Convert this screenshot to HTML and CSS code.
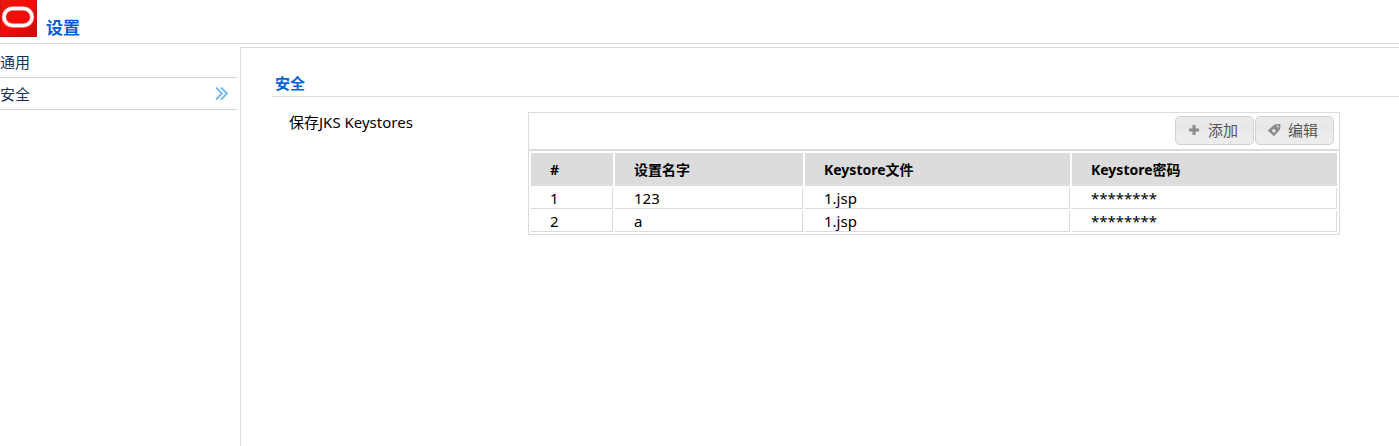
FILE: index.html
```html
<!DOCTYPE html>
<html lang="zh-CN">
<head>
<meta charset="utf-8">
<meta name="viewport" content="width=device-width, initial-scale=1">
<title>设置</title>
<link rel="stylesheet" href="styles.css">
</head>
<body>
<header class="header">
  <svg class="logo" viewBox="0 0 37 37" aria-hidden="true">
    <defs>
      <linearGradient id="red" x1="0" y1="0" x2="1" y2="1">
        <stop offset="0" stop-color="#e8180c"/>
        <stop offset="0.5" stop-color="#f60a05"/>
        <stop offset="1" stop-color="#c90a06"/>
      </linearGradient>
    </defs>
    <rect width="37" height="37" fill="url(#red)"/>
    <path d="M0.5 0V36.5H36.5V0" fill="none" stroke="#b51812" stroke-opacity="0.6"/>
    <rect x="4" y="8.500" width="28" height="17" rx="8.500" fill="none" stroke="#ff9a90" stroke-width="4.600" stroke-opacity="0.6"/>
    <rect x="4" y="8.500" width="28" height="17" rx="8.500" fill="none" stroke="#fff" stroke-width="3.400"/>
  </svg>
  <h1 class="title">设置</h1>
</header>
<div class="layout">
  <nav class="sidebar">
    <a class="nav-item" href="#general">通用</a>
    <a class="nav-item" href="#security" aria-current="page">安全
      <svg class="chevrons" viewBox="0 0 14 14" aria-hidden="true">
        <path d="M1 0.500L7 6.500L1 12.500M6 0.500L12 6.500L6 12.500" fill="none" stroke="#74b9ec" stroke-width="1.8"/>
      </svg>
    </a>
  </nav>
  <main class="content">
    <h2 class="section-title">安全</h2>
    <div class="field">
      <div class="field-label" id="keystores">保存JKS Keystores</div>
      <div class="panel">
        <div class="toolbar">
          <button class="button" type="button">
            <svg class="icon" viewBox="0 0 14 14" aria-hidden="true"><path d="M5.500 2h3v3.500h3.500v3H8.500v3.500h-3V8.500H2v-3h3.500z" fill="#8c8c8c"/></svg>
            添加
          </button>
          <button class="button" type="button">
            <svg class="icon" viewBox="0 0 14 14" aria-hidden="true"><path fill-rule="evenodd" d="M7.500 1.500L12.500 1Q13.500 1 13.500 2L13 6.500L7 13.300L0.700 7.500ZM6.700 5.700L4.700 7.800L6.900 10L8.900 7.800ZM10.800 2.600A0.900 0.900 0 1 0 10.800 4.400A0.900 0.900 0 1 0 10.800 2.600Z" fill="#8c8c8c"/></svg>
            编辑
          </button>
        </div>
        <table class="table" aria-labelledby="keystores">
          <colgroup><col class="col-index"><col class="col-name"><col class="col-file"><col class="col-password"></colgroup>
          <thead>
            <tr><th>#</th><th>设置名字</th><th>Keystore文件</th><th>Keystore密码</th></tr>
          </thead>
          <tbody>
            <tr><td>1</td><td>123</td><td>1.jsp</td><td>********</td></tr>
            <tr><td>2</td><td>a</td><td>1.jsp</td><td>********</td></tr>
          </tbody>
        </table>
      </div>
    </div>
  </main>
</div>
</body>
</html>
```

FILE: styles.css
```css
* {
  box-sizing: border-box;
}

body {
  margin: 0;
  min-height: 100vh;
  display: flex;
  flex-direction: column;
  background: #fff;
  color: #000;
  font-family: "Noto Sans", "Noto Sans CJK SC", sans-serif;
  font-size: 15px;
  line-height: 20px;
}

.header {
  display: flex;
  gap: 9px;
  border-bottom: 1px solid #dcdcdc;
  padding-bottom: 3px;
}

.logo {
  width: 37px;
  height: 37px;
  margin-bottom: 3px;
}

.title {
  margin: 0;
  align-self: flex-end;
  color: #0560d2;
  font-size: 17px;
  line-height: 24px;
}

.layout {
  flex: 1;
  display: flex;
  gap: 3px;
}

.sidebar {
  width: 237px;
  padding-top: 2px;
}

.nav-item {
  display: flex;
  align-items: center;
  justify-content: space-between;
  height: 32px;
  padding-right: 8px;
  border-bottom: 1px solid #d2d2d2;
  color: #16325c;
  text-decoration: none;
}

.chevrons {
  width: 14px;
  height: 14px;
}

.content {
  flex: 1;
  margin-top: 3px;
  padding: 25px 0 0 31px;
  border-top: 1px solid #dcdcdc;
  border-left: 1px solid #dcdcdc;
}

.section-title {
  margin: 0 0 15px;
  padding: 0 3px 3px;
  border-bottom: 1px solid #dcdcdc;
  color: #0560d2;
  font-size: 15px;
  line-height: 20px;
}

.field {
  display: flex;
  padding-right: 59px;
}

.field-label {
  width: 256px;
  padding-left: 17px;
}

.panel {
  flex: 1;
}

.toolbar {
  display: flex;
  justify-content: flex-end;
  gap: 1px;
  padding: 3px 5px 4px;
  border: 1px solid #dcdcdc;
}

.button {
  display: flex;
  align-items: center;
  gap: 7px;
  height: 29px;
  padding: 0 15px 2px 11px;
  border: 1px solid #d0d0d0;
  border-radius: 5px;
  background: linear-gradient(#ececec, #e6e6e6 49%, #ebebeb 50%, #ededed);
  color: #555;
  font: inherit;
}

.icon {
  width: 14px;
  height: 14px;
}

.table {
  width: 100%;
  table-layout: fixed;
  border: 1px solid #dcdcdc;
  border-collapse: separate;
  border-spacing: 2px;
}

.col-index {
  width: 82px;
}

.col-name {
  width: 188px;
}

.table th {
  height: 33px;
  padding: 0 19px;
  background: #dcdcdc;
  font-size: 14px;
  text-align: left;
}

.table td {
  height: 21px;
  padding: 0 19px;
  border-right: 1px solid #dcdcdc;
  border-bottom: 1px solid #dcdcdc;
}
```
